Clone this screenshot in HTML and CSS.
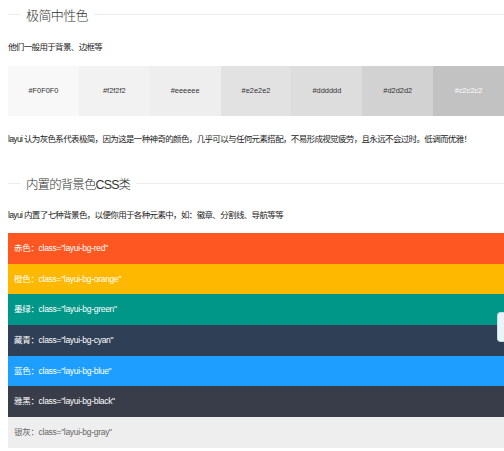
FILE: index.html
```html
<!DOCTYPE html>
<html lang="zh-CN">
<head>
<meta charset="utf-8">
<title>颜色</title>
<link rel="stylesheet" href="styles.css">
</head>
<body>
<div class="page">
  <div class="field-title"><span class="legend">极简中性色</span></div>
  <p class="text t1">他们一般用于背景、边框等</p>
  <ul class="swatches">
    <li class="sw sw1">#F0F0F0</li>
    <li class="sw sw2">#f2f2f2</li>
    <li class="sw sw3">#eeeeee</li>
    <li class="sw sw4">#e2e2e2</li>
    <li class="sw sw5">#dddddd</li>
    <li class="sw sw6">#d2d2d2</li>
    <li class="sw sw7">#c2c2c2</li>
  </ul>
  <p class="text t2">layui 认为灰色系代表极简，因为这是一种神奇的颜色，几乎可以与任何元素搭配，不易形成视觉疲劳，且永远不会过时。低调而优雅！</p>
  <div class="field-title ft2"><span class="legend">内置的背景色CSS类</span></div>
  <p class="text t3">layui 内置了七种背景色，以便你用于各种元素中，如：徽章、分割线、导航等等</p>
  <div class="bg-list">
    <div class="bg bg-red">赤色：class="layui-bg-red"</div>
    <div class="bg bg-orange">橙色：class="layui-bg-orange"</div>
    <div class="bg bg-green">墨绿：class="layui-bg-green"</div>
    <div class="bg bg-cyan">藏青：class="layui-bg-cyan"</div>
    <div class="bg bg-blue">蓝色：class="layui-bg-blue"</div>
    <div class="bg bg-black">雅黑：class="layui-bg-black"</div>
    <div class="bg bg-gray">银灰：class="layui-bg-gray"</div>
  </div>
</div>
<div class="side-tab"></div>
</body>
</html>
```
FILE: styles.css
```css
html, body {
  margin: 0;
  padding: 0;
  background: #fff;
}
body {
  width: 504px;
  height: 451px;
  position: relative;
  overflow: hidden;
  font-family: "Liberation Sans", "Noto Sans CJK SC", sans-serif;
  color: #333;
}
.page {
  width: 504px;
  box-sizing: border-box;
  padding-left: 8px;
}
.field-title {
  display: flex;
  align-items: center;
  height: 24px;
  margin-top: 4px;
}
.field-title::before {
  content: "";
  width: 12px;
  border-top: 1px solid #ececec;
  margin-top: -3px;
}
.field-title::after {
  content: "";
  flex: 1;
  border-top: 1px solid #ececec;
  margin-top: -3px;
}
.legend {
  padding: 0 6px;
  font-size: 13px;
  letter-spacing: -0.6px;
  font-weight: 300;
  line-height: 24px;
  color: #333;
}
.ft2 {
  margin-top: 24px;
}
.ft2 .legend {
  font-size: 12.4px;
  letter-spacing: -0.8px;
}
.text {
  margin: 0;
  font-size: 8.5px;
  letter-spacing: -0.65px;
  line-height: 20px;
  color: #222;
  white-space: nowrap;
}
.t1 { margin-top: 9px; }
.t2 { margin-top: 13px; }
.t3 { margin-top: 8px; }
.swatches {
  list-style: none;
  margin: 9px 0 0;
  padding: 0;
  display: flex;
}
.sw {
  flex: 1;
  height: 50px;
  line-height: 50px;
  text-align: center;
  font-size: 7.4px;
  color: #333;
}
.sw1 { background: #f8f8f8; }
.sw2 { background: #f2f2f2; }
.sw3 { background: #eeeeee; }
.sw4 { background: #e2e2e2; }
.sw5 { background: #dddddd; }
.sw6 { background: #d2d2d2; }
.sw7 { background: #c2c2c2; color: #fff; }
.bg-list {
  margin-top: 8px;
  display: flex;
  flex-direction: column;
}
.bg {
  height: 30.7px;
  line-height: 30.7px;
  padding-left: 6px;
  font-size: 8.5px;
  letter-spacing: -0.3px;
  color: #fff;
  white-space: nowrap;
}
.bg-red { background: #ff5722; }
.bg-orange { background: #ffb800; }
.bg-green { background: #009688; }
.bg-cyan { background: #2f4056; }
.bg-blue { background: #1e9fff; }
.bg-black { background: #393d49; }
.bg-gray { background: #eeeeee; color: #666; }
.side-tab {
  position: absolute;
  right: 0;
  top: 312px;
  width: 7px;
  height: 30px;
  box-sizing: border-box;
  background: #eaf5f8;
  border: 1px solid #c9dfe6;
  border-right: none;
  border-radius: 4px 0 0 4px;
}
```
